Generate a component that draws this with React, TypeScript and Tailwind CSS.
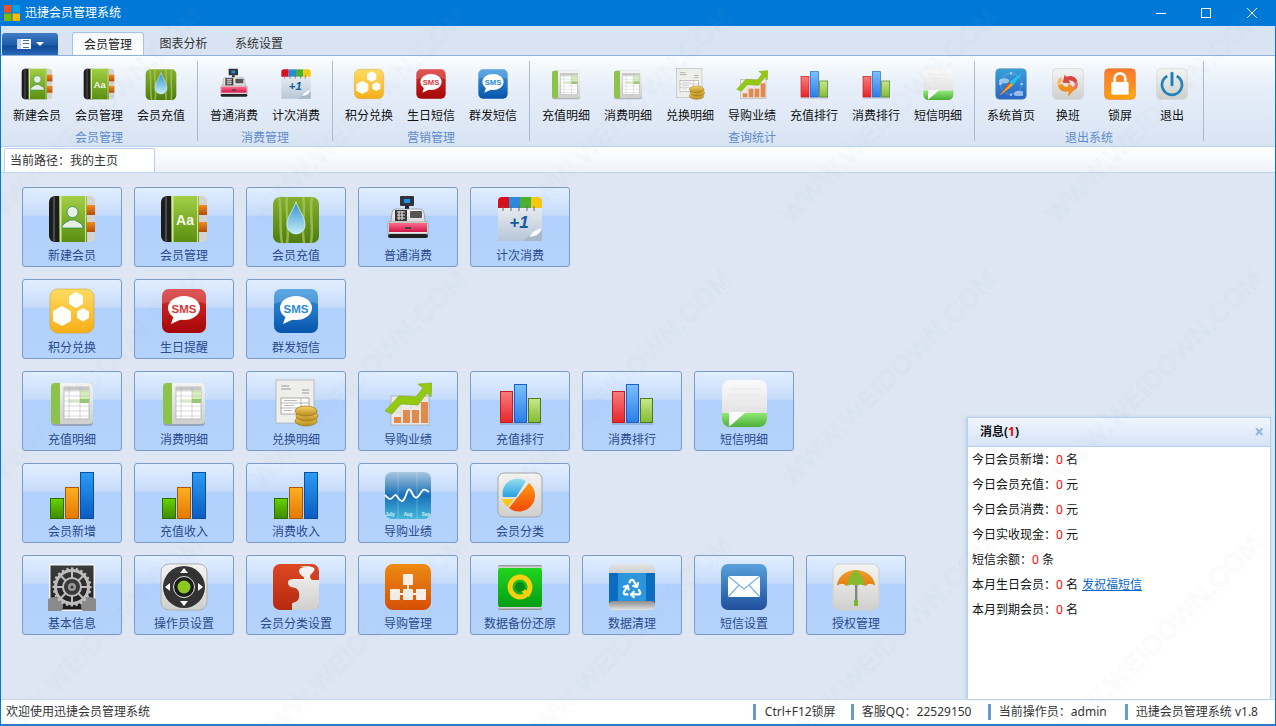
import { ReactNode } from "react";
import { Recycle } from "lucide-react";

const FONT = "font-['Noto_Sans','Noto_Sans_CJK_SC',sans-serif]";

function Grad({ id, from, to, mid }: { id: string; from: string; to: string; mid?: string }) {
  return (
    <linearGradient id={id} x1="0" y1="0" x2="0" y2="1">
      <stop offset="0" stopColor={from} />
      {mid && <stop offset="0.5" stopColor={mid} />}
      <stop offset="1" stopColor={to} />
    </linearGradient>
  );
}

function SharedDefs() {
  return (
    <svg className="absolute h-0 w-0">
      <defs>
        <Grad id="bookGreen" from="#a2cf45" to="#5b8f12" />
        <Grad id="orangeTab" from="#f58a1e" to="#b84a08" />
        <Grad id="stripes" from="#86b02c" to="#4f7c10" />
        <Grad id="drop" from="#2f8fd0" to="#c4ecf8" />
        <Grad id="gold" from="#ffdc62" to="#f7ae16" />
        <Grad id="red" from="#d9302e" to="#a50606" />
        <Grad id="blue" from="#3a96de" to="#0754ac" />
        <Grad id="silver" from="#f4f4f2" to="#cfcfcd" />
        <Grad id="barR" from="#f87d7d" to="#e8252a" />
        <Grad id="barB" from="#7cc0ff" to="#2b7de8" />
        <Grad id="barG" from="#c9e88a" to="#82bb34" />
        <Grad id="bar2G" from="#66d400" to="#3f8a00" />
        <Grad id="bar2O" from="#ffb020" to="#e47800" />
        <Grad id="bar2B" from="#2b9bf4" to="#0a5cc0" />
        <Grad id="note" from="#fbfbfb" to="#d8d8d8" />
        <Grad id="noteG" from="#8eea70" to="#4cae3c" />
        <Grad id="chart" from="#a9c6de" to="#46b6d8" mid="#1870b8" />
        <Grad id="puzzle" from="#dd4722" to="#b52a10" />
        <Grad id="org" from="#ee8a12" to="#d64f04" />
        <Grad id="barrel" from="#22d81e" to="#059a14" />
        <Grad id="steel" from="#8c8c8c" to="#e2e2e2" />
        <Grad id="steel2" from="#e2e2e2" to="#868686" />
        <Grad id="mail" from="#5aa0dc" to="#1f4f9c" />
        <Grad id="compass" from="#38a0d8" to="#2a62c8" />
        <Grad id="lock" from="#ff7a30" to="#ff9c08" />
        <Grad id="calBody" from="#f6f8fa" to="#b8c6d6" />
        <Grad id="coin" from="#f6d56a" to="#b98a18" />
        <Grad id="pieO" from="#ff9a10" to="#f24a08" />
        <Grad id="pieB" from="#98e0f0" to="#28a0e0" />
        <Grad id="canopy" from="#f3a030" to="#e07c10" />
        <Grad id="dial" from="#3c3c3c" to="#1c1c1c" />
        <Grad id="pink" from="#ff6a8c" to="#d01848" />
      </defs>
    </svg>
  );
}

function Svg({ children }: { children: ReactNode }) {
  return (
    <svg viewBox="0 0 48 48" className="block h-full w-full">
      {children}
    </svg>
  );
}

function BookBase({ children }: { children: ReactNode }) {
  return (
    <Svg>
      <rect x="30" y="1" width="17" height="46" rx="5" fill="#d6d2ce" />
      <rect x="39" y="10" width="8" height="10" fill="url(#orangeTab)" />
      <rect x="39" y="27" width="8" height="10" fill="url(#orangeTab)" />
      <rect x="1" y="1" width="18" height="46" rx="6" fill="#1d1d1d" />
      <rect x="5" y="1" width="2" height="46" fill="#4a4a4a" />
      <rect x="11" y="1" width="28" height="46" fill="url(#bookGreen)" />
      <rect x="12" y="1" width="1.5" height="46" fill="#d6e8a8" />
      <rect x="37" y="1" width="1" height="46" fill="#d0e4a0" />
      {children}
    </Svg>
  );
}

function Sms({ fill, text }: { fill: string; text: string }) {
  return (
    <Svg>
      <rect x="2" y="2" width="44" height="44" rx="7" fill={`url(#${fill})`} />
      <path d="M2 9a7 7 0 0 1 7-7h30a7 7 0 0 1 7 7v8c-12-5-32-5-44 0z" fill="#fff" opacity=".18" />
      <ellipse cx="24" cy="21" rx="16" ry="12" fill="#fff" />
      <path d="M14 28l-3 9 11-5z" fill="#fff" />
      <text x="24" y="25.5" textAnchor="middle" fontSize="11.5" fontWeight="700" fill={text} fontFamily="Liberation Sans, sans-serif">
        SMS
      </text>
    </Svg>
  );
}

function Sheet() {
  const ys = [10, 15, 20, 25, 30, 35];
  return (
    <Svg>
      <rect x="3" y="4" width="42" height="43" rx="4" fill="#6e6e6e" opacity=".45" />
      <rect x="3" y="4" width="42" height="41" rx="4" fill="url(#silver)" />
      <path d="M7 4h5v41H7a4 4 0 0 1-4-4V8a4 4 0 0 1 4-4z" fill="#8cc34a" />
      <rect x="16" y="8" width="25" height="32" fill="#fff" stroke="#a8a8a8" strokeWidth=".7" />
      <rect x="16" y="8" width="25" height="3.5" fill="#c8c8c8" />
      <rect x="32" y="11" width="9" height="9" fill="#d6eebc" />
      <rect x="32" y="20" width="9" height="4" fill="#96c86a" />
      <rect x="21" y="20" width="11" height="4" fill="#e2f2d2" />
      {ys.map((y) => (
        <line key={y} x1="16" x2="41" y1={y + 2} y2={y + 2} stroke="#bbb" strokeWidth=".5" />
      ))}
      <line x1="21" x2="21" y1="8" y2="40" stroke="#aaa" strokeWidth=".5" />
      <line x1="32" x2="32" y1="8" y2="40" stroke="#aaa" strokeWidth=".5" />
    </Svg>
  );
}

function Bars3() {
  return (
    <Svg>
      <rect x="4.5" y="12.5" width="12" height="31" fill="url(#barR)" stroke="#c81c1c" />
      <rect x="18.5" y="5.5" width="12" height="38" fill="url(#barB)" stroke="#1c60c4" />
      <rect x="32.5" y="19.5" width="12" height="24" fill="url(#barG)" stroke="#4c7a18" />
      <rect x="4" y="44" width="41" height="2" fill="#506070" opacity=".25" />
    </Svg>
  );
}

function Bars2() {
  return (
    <Svg>
      <rect x="2.5" y="27.5" width="13" height="20" fill="url(#bar2G)" stroke="#2f6a10" />
      <rect x="17.5" y="16.5" width="13" height="31" fill="url(#bar2O)" stroke="#a85a08" />
      <rect x="32.5" y="1.5" width="13" height="46" fill="url(#bar2B)" stroke="#0b4ca0" />
    </Svg>
  );
}

function Growth() {
  return (
    <Svg>
      <rect x="7" y="17" width="38" height="29" fill="#ece9e4" stroke="#aaa" strokeWidth=".8" />
      <path d="M7 24h38M7 33h38M17 17v29M27 17v29M37 17v29" stroke="#ccc" strokeWidth=".5" />
      <rect x="10" y="38" width="7" height="6" fill="#e08a4e" />
      <rect x="19" y="31" width="7" height="13" fill="#e08a4e" />
      <rect x="28" y="31" width="7" height="13" fill="#e08a4e" />
      <rect x="37" y="23" width="7" height="21" fill="#e08a4e" />
      <path d="M1 32L15 17l17 1L39 9l-5-4 14-1-1 14-4-4-9 12-17-1-9 10z" fill="#94c912" stroke="#6f9c0a" strokeWidth=".5" />
    </Svg>
  );
}

const icons: Record<string, ReactNode> = {
  bookUser: (
    <BookBase>
      <circle cx="24.5" cy="17" r="5.5" fill="#e8efe2" stroke="#0e8a60" strokeWidth=".7" />
      <path d="M14 33c0-5 6-6 8-8h5c2 2 8 3 8 8z" fill="#e8efe2" stroke="#0e8a60" strokeWidth=".7" />
    </BookBase>
  ),
  bookAa: (
    <BookBase>
      <text x="25" y="30" textAnchor="middle" fontSize="14" fontWeight="700" fill="#f4f8e8" fontFamily="Liberation Sans, sans-serif">
        Aa
      </text>
    </BookBase>
  ),
  water: (
    <Svg>
      <rect x="1" y="2" width="46" height="46" rx="7" fill="url(#stripes)" />
      <path d="M7 2c3 14 0 30 3 46M15 2c-2 14 3 30 0 46M31 2c3 14-2 30 1 46M40 2c-3 14 2 30-1 46" stroke="#a8ca62" strokeWidth="2.5" fill="none" opacity=".7" />
      <path d="M24 7c3 9 9 15 9 23a9 9 0 0 1-18 0c0-8 6-14 9-23z" fill="url(#drop)" stroke="#d8f2f8" strokeWidth=".8" />
    </Svg>
  ),
  register: (
    <Svg>
      <rect x="16" y="1" width="14" height="10" rx="1" fill="#30343a" />
      <rect x="20" y="4" width="6" height="4" fill="#1c8fe8" />
      <rect x="21" y="11" width="4" height="3" fill="#222" />
      <path d="M8 18q0-4 4-4h24q4 0 4 4l2 14H6z" fill="url(#silver)" stroke="#7e7e7e" strokeWidth=".6" />
      <rect x="11" y="15" width="12" height="11" fill="#3a3a3a" />
      <path d="M13 17h8M13 20h8M13 23h8M15 16v9M18 16v9" stroke="#ddd" strokeWidth="1.2" />
      <rect x="26" y="16" width="12" height="7" rx="1" fill="#555" />
      <rect x="4" y="27" width="40" height="12" rx="1" fill="#e8e8e8" stroke="#777" strokeWidth=".5" />
      <rect x="5" y="28" width="38" height="9" fill="url(#pink)" />
      <rect x="21" y="32" width="6" height="2" fill="#444" />
      <rect x="4" y="39" width="40" height="4" rx="2" fill="#222" />
    </Svg>
  ),
  calendar: (
    <Svg>
      <path d="M2 6q0-4 4-4h36q4 0 4 4v40H2z" fill="url(#calBody)" />
      <path d="M2 6q0-4 4-4h7v11H2z" fill="#d5101c" />
      <rect x="13" y="2" width="11" height="11" fill="#2b8ad8" />
      <rect x="24" y="2" width="11" height="11" fill="#4ab030" />
      <path d="M35 2h7q4 0 4 4v7H35z" fill="#f8c810" />
      <path d="M7 11v5M15 11v5M23 11v5M31 11v5M38 11v5" stroke="#666" strokeWidth="1" />
      <text x="23" y="33" textAnchor="middle" fontSize="17" fontWeight="700" fontStyle="italic" fill="#0f5ca0" fontFamily="Liberation Sans, sans-serif">
        +1
      </text>
      <path d="M46 33c-6 6-12 6-18 13h18z" fill="#9fb0c2" opacity=".7" />
      <path d="M46 33c-4 1-11 4-12 9 4-1 9-1 12-9z" fill="#fff" />
    </Svg>
  ),
  hex: (
    <Svg>
      <rect x="2" y="2" width="44" height="44" rx="8" fill="url(#gold)" stroke="#d8a030" strokeWidth=".6" />
      <polygon points="28,5 35,9 35,17 28,21 21,17 21,9" fill="#fdfdf8" />
      <polygon points="14,19 23,24 23,34 14,39 5,34 5,24" fill="#fdfdf8" />
      <polygon points="35,21 41,24.5 41,31 35,34.5 29,31 29,24.5" fill="#fdfdf8" />
    </Svg>
  ),
  smsRed: <Sms fill="red" text="#d83838" />,
  smsBlue: <Sms fill="blue" text="#2a8ad8" />,
  sheet: <Sheet />,
  invoice: (
    <Svg>
      <rect x="4" y="1" width="38" height="43" fill="#eeeeea" stroke="#a8a8a8" strokeWidth=".7" />
      <path d="M9 7h8M9 10h10M30 11h7M30 14h7" stroke="#999" strokeWidth="1" />
      <rect x="9" y="19" width="28" height="16" fill="#fff" stroke="#888" strokeWidth=".7" />
      <path d="M9 24h28M9 29h28M29 19v16M12 21.5h13M12 26.5h10M12 31.5h8" stroke="#999" strokeWidth=".7" />
      <ellipse cx="34" cy="42" rx="11" ry="5" fill="url(#coin)" stroke="#8d6a10" strokeWidth=".6" />
      <ellipse cx="35" cy="37" rx="11" ry="5" fill="url(#coin)" stroke="#8d6a10" strokeWidth=".6" />
      <ellipse cx="34" cy="32" rx="11" ry="5" fill="url(#coin)" stroke="#8d6a10" strokeWidth=".6" />
    </Svg>
  ),
  growth: <Growth />,
  bars3: <Bars3 />,
  note: (
    <Svg>
      <rect x="2" y="1" width="45" height="47" rx="8" fill="url(#note)" />
      <path d="M10 10h30M10 16h30M10 22h30M10 28h30" stroke="#e6e6e6" strokeWidth=".8" />
      <path d="M2 34h45v6a8 8 0 0 1-8 8H10a8 8 0 0 1-8-8z" fill="url(#noteG)" />
      <path d="M9 33h17L10 47H9z" fill="#fafafa" />
    </Svg>
  ),
  bars2: <Bars2 />,
  chart: (
    <Svg>
      <rect x="1" y="1" width="46" height="47" rx="7" fill="url(#chart)" />
      <path d="M14 1v47M33 1v47" stroke="#fff" strokeWidth=".5" opacity=".5" />
      <path d="M1 24c3 3 5 6 8 2s3-2 6 2 5 2 7-4 3-8 6-2 5 6 8 1 4-6 9-2" fill="none" stroke="#fff" strokeWidth="1.8" />
      <g fontSize="4.5" fontWeight="700" fill="#d8f0f8" fontFamily="Liberation Sans, sans-serif" textAnchor="middle">
        <text x="6" y="45">July</text>
        <text x="24" y="45">Aug</text>
        <text x="42" y="45">Sep</text>
      </g>
    </Svg>
  ),
  pie: (
    <Svg>
      <rect x="2" y="2" width="44" height="44" rx="6" fill="url(#silver)" stroke="#a6a6a6" />
      <path d="M33 12a15 15 0 1 1-20 25z" fill="url(#pieO)" />
      <path d="M30 10L20 26H7a15 15 0 0 1 23-16z" fill="url(#pieB)" />
      <path d="M6 28h12l-6 8c-3-2-5-5-6-8z" fill="#ffc814" />
    </Svg>
  ),
  gear: (
    <Svg>
      <rect x="1" y="1" width="46" height="47" rx="1" fill="#f4f4f4" />
      <rect x="2.5" y="2.5" width="43" height="44" fill="url(#dial)" />
      <circle cx="6" cy="43" r="9" fill="#8a8a8a" />
      <circle cx="42" cy="43" r="9" fill="#8a8a8a" />
      {Array.from({ length: 24 }, (_, i) => (
        <rect key={i} x="23" y="4.5" width="2.4" height="4" fill="#bdbdbd" transform={`rotate(${i * 15} 24 24)`} />
      ))}
      <circle cx="24" cy="24" r="16.5" fill="none" stroke="#bdbdbd" strokeWidth="3" />
      <path d="M24 8v32M8 24h32M12 12l24 24M36 12L12 36" stroke="#bdbdbd" strokeWidth="2" />
      <circle cx="24" cy="24" r="9" fill="#3a3a3a" stroke="#bdbdbd" strokeWidth="2" />
      <circle cx="24" cy="24" r="4" fill="#999" />
      <circle cx="24" cy="24" r="1.5" fill="#333" />
    </Svg>
  ),
  dpad: (
    <Svg>
      <rect x="1" y="1" width="46" height="46" rx="8" fill="url(#silver)" stroke="#b0b0b0" />
      <circle cx="24" cy="24" r="21" fill="#333" />
      <circle cx="24" cy="24" r="10.5" fill="#1c1c1c" stroke="#ddd" strokeWidth="1" />
      <circle cx="24" cy="24" r="6.5" fill="#8cc820" />
      <polygon points="24,5 20,10 28,10" fill="#fff" />
      <polygon points="24,43 20,38 28,38" fill="#fff" />
      <polygon points="5,24 10,20 10,28" fill="#fff" />
      <polygon points="43,24 38,20 38,28" fill="#fff" />
    </Svg>
  ),
  puzzle: (
    <Svg>
      <rect x="1" y="1" width="46" height="46" rx="7" fill="url(#puzzle)" />
      <path d="M27 4c5-1 13-1 15 1 2 3-3 5-4 8 0 2 1 4 3 4h6v24a6 6 0 0 1-6 6H20v-6c0-2 3-1 5-3 3-2 3-9 0-12-2-2-5-1-6-2-2-1-3-2-3-5 0-2 2-3 6-3h10c1-3-4-3-5-7 0-3 1-4 5-5z" fill="url(#silver)" />
    </Svg>
  ),
  org: (
    <Svg>
      <rect x="1" y="1" width="46" height="46" rx="8" fill="url(#org)" />
      <rect x="19" y="11" width="10" height="11" rx="1" fill="#f7efe6" />
      <rect x="6" y="26" width="10" height="11" rx="1" fill="#f7efe6" />
      <rect x="19" y="26" width="10" height="11" rx="1" fill="#f7efe6" />
      <rect x="32" y="26" width="10" height="11" rx="1" fill="#f7efe6" />
      <path d="M24 22v5M16 31h16" stroke="#f7efe6" strokeWidth="2" />
    </Svg>
  ),
  backup: (
    <Svg>
      <rect x="2" y="2" width="44" height="45" rx="6" fill="url(#barrel)" />
      <rect x="2" y="2" width="44" height="3" rx="1.5" fill="url(#steel)" />
      <rect x="2" y="44" width="44" height="3" rx="1.5" fill="url(#steel2)" />
      <circle cx="24" cy="24" r="10" fill="none" stroke="#f8d010" strokeWidth="5" />
      <path d="M24 24l11 6-2 4-9-6z" fill="#f8d010" />
      <circle cx="24" cy="24" r="5" fill="#0a8a18" />
    </Svg>
  ),
  recycle: (
    <Svg>
      <rect x="1" y="1" width="46" height="46" rx="6" fill="url(#steel2)" />
      <rect x="1" y="10" width="46" height="30" fill="#0c6cc0" />
      <rect x="10" y="10" width="28" height="30" fill="#3aa8e8" opacity=".7" />
      <rect x="1" y="38" width="46" height="9" rx="4" fill="url(#steel)" />
      <Recycle x={13} y={14} width={22} height={22} color="#fff" strokeWidth={2.4} />
    </Svg>
  ),
  mail: (
    <Svg>
      <rect x="1" y="1" width="46" height="46" rx="7" fill="url(#mail)" />
      <rect x="8" y="13" width="32" height="21" fill="#fff" />
      <path d="M8 13l16 13 16-13M8 34l11-12M40 34L29 22" fill="none" stroke="#7ab0e0" strokeWidth="1.2" />
    </Svg>
  ),
  umbrella: (
    <Svg>
      <rect x="1" y="1" width="46" height="46" rx="7" fill="url(#silver)" stroke="#d0d0d0" />
      <path d="M5 23a19 16 0 0 1 38 0c-3-3-7-3-9 0-3-3-7-3-10 0-3-3-7-3-10 0-2-3-6-3-9 0z" fill="url(#canopy)" />
      <path d="M24 7c-5 3-8 9-9 16 3-2 6-2 9 0 3-2 6-2 9 0-1-7-4-13-9-16z" fill="#8ab82c" />
      <rect x="23" y="22" width="2.4" height="17" fill="#7e8a80" />
      <rect x="22" y="37" width="4" height="6" fill="#7cb82a" />
    </Svg>
  ),
  compass: (
    <Svg>
      <rect x="1" y="1" width="46" height="46" rx="6" fill="url(#compass)" stroke="#6a9ab0" />
      <path d="M6 18c4-3 10-4 14-1 3 2 0 6-4 6s-7 1-10-1zM28 38c3-4 9-5 14-3v7H30z" fill="#d8eef8" opacity=".6" />
      <path d="M24 6v4M24 38v4M6 24h4M38 24h4" stroke="#fff" strokeWidth="1.4" />
      <circle cx="24" cy="24" r="16" fill="none" stroke="#fff" strokeWidth=".7" opacity=".4" />
      <path d="M42 6L22 21l5 5z" fill="#22c4f4" />
      <path d="M6 42l16-21 5 5z" fill="#e2561a" />
      <path d="M6 42l18-19 3 3z" fill="#f8b020" />
    </Svg>
  ),
  swap: (
    <Svg>
      <rect x="1" y="1" width="46" height="46" rx="6" fill="url(#silver)" stroke="#d0d0d0" />
      <path d="M38 21c-1-8-9-11-16-8l-3-3-3 12 12 1-3-4c4-1 7 0 9 4z" fill="#d84840" />
      <path d="M38 21c2 6 0 11-6 13l-1-5c3-1 4-4 3-6z" fill="#e87068" />
      <path d="M9 26c1 8 9 11 16 9l-1 8 11-12-10-8-1 5c-4 1-7-1-8-4z" fill="#ee9020" />
      <path d="M9 26c-2-6 0-10 5-12l2 5c-3 1-4 3-3 6z" fill="#f6bc60" />
    </Svg>
  ),
  lock: (
    <Svg>
      <rect x="1" y="1" width="46" height="46" rx="6" fill="url(#lock)" stroke="#e07a2c" />
      <path d="M47 7v22L26 47h15a6 6 0 0 0 6-6z" fill="#ffb018" opacity=".5" />
      <path d="M16 22v-6a8 8 0 0 1 16 0v6" fill="none" stroke="#fff" strokeWidth="4" />
      <rect x="11" y="21" width="26" height="19" rx="2" fill="#fff" />
    </Svg>
  ),
  power: (
    <Svg>
      <rect x="1" y="1" width="46" height="46" rx="6" fill="url(#silver)" stroke="#d4d4d4" />
      <path d="M17 12a15 15 0 1 0 14 0" fill="none" stroke="#1f82b8" strokeWidth="4" />
      <path d="M24 8v17" stroke="#1f82b8" strokeWidth="4.5" strokeLinecap="round" />
    </Svg>
  ),
};

type Item = [string, string];

const ribbon: { name: string; items: Item[] }[] = [
  { name: "会员管理", items: [["新建会员", "bookUser"], ["会员管理", "bookAa"], ["会员充值", "water"]] },
  { name: "消费管理", items: [["普通消费", "register"], ["计次消费", "calendar"]] },
  { name: "营销管理", items: [["积分兑换", "hex"], ["生日短信", "smsRed"], ["群发短信", "smsBlue"]] },
  {
    name: "查询统计",
    items: [["充值明细", "sheet"], ["消费明细", "sheet"], ["兑换明细", "invoice"], ["导购业绩", "growth"], ["充值排行", "bars3"], ["消费排行", "bars3"], ["短信明细", "note"]],
  },
  { name: "退出系统", items: [["系统首页", "compass"], ["换班", "swap"], ["锁屏", "lock"], ["退出", "power"]] },
];

const tileRows: Item[][] = [
  [["新建会员", "bookUser"], ["会员管理", "bookAa"], ["会员充值", "water"], ["普通消费", "register"], ["计次消费", "calendar"]],
  [["积分兑换", "hex"], ["生日提醒", "smsRed"], ["群发短信", "smsBlue"]],
  [["充值明细", "sheet"], ["消费明细", "sheet"], ["兑换明细", "invoice"], ["导购业绩", "growth"], ["充值排行", "bars3"], ["消费排行", "bars3"], ["短信明细", "note"]],
  [["会员新增", "bars2"], ["充值收入", "bars2"], ["消费收入", "bars2"], ["导购业绩", "chart"], ["会员分类", "pie"]],
  [["基本信息", "gear"], ["操作员设置", "dpad"], ["会员分类设置", "puzzle"], ["导购管理", "org"], ["数据备份还原", "backup"], ["数据清理", "recycle"], ["短信设置", "mail"], ["授权管理", "umbrella"]],
];

const messages: { label: string; unit: string; link?: string }[] = [
  { label: "今日会员新增：", unit: "名" },
  { label: "今日会员充值：", unit: "元" },
  { label: "今日会员消费：", unit: "元" },
  { label: "今日实收现金：", unit: "元" },
  { label: "短信余额：", unit: "条" },
  { label: "本月生日会员：", unit: "名", link: "发祝福短信" },
  { label: "本月到期会员：", unit: "名" },
];

function Tile({ label, icon }: { label: string; icon: string }) {
  return (
    <div className="flex h-20 w-[100px] flex-col items-center rounded-[3px] border border-[#7a9aca] bg-[linear-gradient(#e2eeff_0%,#c6dcfb_35%,#b0d1fc_36%,#b4d3fb_100%)] pt-[7px]">
      <div className="h-12 w-12">{icons[icon]}</div>
      <span className="mt-[5px] text-xs leading-4 text-[#2a4a8e]">{label}</span>
    </div>
  );
}

function Watermarks() {
  const marks: [number, number][] = [];
  for (const y of [20, 283, 548]) {
    for (let x = 208; x < 1500; x += 265) marks.push([x, y]);
  }
  return (
    <div className="pointer-events-none absolute inset-0 overflow-hidden">
      {marks.map(([x, y]) => (
        <span
          key={`${x}-${y}`}
          className="absolute origin-bottom-right -rotate-45 whitespace-nowrap font-['Liberation_Sans',sans-serif] text-[26px] leading-none tracking-[1px] text-transparent [-webkit-text-stroke:0.7px_rgba(150,170,200,0.13)]"
          style={{ right: 1276 - x, top: y - 26 }}
        >
          WWW.WEIDOWN.COM
        </span>
      ))}
    </div>
  );
}

export default function App() {
  return (
    <div className={`${FONT} relative flex h-screen w-full flex-col overflow-hidden border-x border-[#0078d7] bg-[#dde6f2] text-xs text-[#222]`}>
      <SharedDefs />

      <header className="flex h-[26px] shrink-0 items-center bg-[#0078d7] pl-[3px] text-white">
        <svg viewBox="0 0 16 16" className="h-4 w-4">
          <rect width="7.5" height="7.5" fill="#f25022" />
          <rect x="8.5" width="7.5" height="7.5" fill="#00a4ef" />
          <rect y="8.5" width="7.5" height="7.5" fill="#7fba00" />
          <rect x="8.5" y="8.5" width="7.5" height="7.5" fill="#ffb900" />
        </svg>
        <span className="ml-[5px] leading-4">迅捷会员管理系统</span>
        <div className="ml-auto flex items-center pr-[18px]">
          <div className="h-px w-[10px] bg-white" />
          <div className="ml-[35px] h-[10px] w-[10px] border border-white" />
          <svg viewBox="0 0 10 10" className="ml-[36px] h-[10px] w-[10px]">
            <path d="M0 0l10 10M10 0L0 10" stroke="#fff" strokeWidth="1" />
          </svg>
        </div>
      </header>

      <nav className="flex h-[29px] shrink-0 items-end bg-[#d8e4f2] pl-px">
        <div className="mb-0 flex h-[22px] w-[56px] items-center justify-center gap-[5px] rounded-t-[3px] bg-[linear-gradient(#3f7cc4_0%,#1d5aa8_55%,#0f4a98_60%,#2a68b8_100%)]">
          <div className="flex h-[10px] w-[14px] bg-white">
            <div className="w-[4px] bg-[#c8d4e4]" />
            <div className="flex flex-1 flex-col justify-around px-[2px]">
              <div className="h-px bg-[#4a6a9c]" />
              <div className="h-px bg-[#4a6a9c]" />
              <div className="h-px bg-[#4a6a9c]" />
            </div>
          </div>
          <div className="h-0 w-0 border-x-[4px] border-t-[4px] border-x-transparent border-t-white" />
        </div>
        <div className="ml-[14px] flex h-[23px] w-[72px] items-center justify-center rounded-t-[3px] border border-b-0 border-[#a9c2e2] bg-[linear-gradient(#f4f8fd,#ffffff)] pt-px leading-4">
          会员管理
        </div>
        <div className="flex h-[23px] w-[79px] items-center justify-center pt-px leading-4 text-[#333]">图表分析</div>
        <div className="flex h-[23px] w-[72px] items-center justify-center pt-px leading-4 text-[#333]">系统设置</div>
      </nav>

      <section className="flex h-[92px] shrink-0 border-y border-t-[#90b0dc] border-b-[#b8d2f4] bg-[linear-gradient(#fbfdff_0%,#e6eef9_35%,#d9e4f3_100%)] pl-[5px]">
        {ribbon.map((group) => (
          <div key={group.name} className="flex">
            <div className="flex flex-col items-center">
              <div className="flex">
                {group.items.map(([label, icon]) => (
                  <div key={label} className={`flex flex-col items-center pt-3 ${label.length > 2 ? "w-[62px]" : "w-[52px]"}`}>
                    <div className="h-8 w-8">{icons[icon]}</div>
                    <span className="mt-[8px] leading-4 text-[#111]">{label}</span>
                  </div>
                ))}
              </div>
              <span className="mt-[6px] leading-4 text-[#5f8ccc]">{group.name}</span>
            </div>
            <div className="mx-[5px] mt-[5px] h-20 w-px bg-[#a9bbd2]" />
          </div>
        ))}
      </section>

      <div className="flex h-[26px] shrink-0 border-b border-[#c0d4ec] bg-[linear-gradient(#ffffff,#eef3fa)] pl-[3px] pt-px">
        <div className="flex h-[24px] w-[151px] items-center rounded-t-[2px] border-x border-t border-[#bdd0e8] bg-white pl-[5px] leading-4 text-[#333]">
          当前路径：我的主页
        </div>
      </div>

      <main className="relative flex flex-1 flex-col gap-3 pl-[21px] pt-[14px]">
        {tileRows.map((row, i) => (
          <div key={i} className="flex gap-3">
            {row.map(([label, icon]) => (
              <Tile key={label + icon} label={label} icon={icon} />
            ))}
          </div>
        ))}

        <aside className="absolute bottom-0 right-[4px] flex h-[282px] w-[304px] flex-col border-x border-t border-[#b6d0f2] bg-white shadow-[-1px_0_3px_rgba(120,160,220,0.4)]">
          <div className="flex h-[29px] shrink-0 items-center border-b border-[#b6d0f2] bg-[linear-gradient(#f0f5ff,#d6e4f6)] pl-3 pr-[6px]">
            <span className="font-bold leading-4 text-[#111]">
              消息(<span className="text-[#f00]">1</span>)
            </span>
            <span className="ml-auto text-[17px] font-bold leading-4 text-[#8fb2e0]">×</span>
          </div>
          <div className="px-[4px]">
            {messages.map((m) => (
              <div key={m.label} className="flex h-[25px] items-center whitespace-pre leading-4 text-[#111]">
                <span>{m.label}</span>
                <span className="text-[#f00]">0</span>
                <span> {m.unit}</span>
                {m.link && <a className="ml-1 text-[#0a66c8] underline">{m.link}</a>}
              </div>
            ))}
          </div>
        </aside>
      </main>

      <footer className="flex h-[27px] shrink-0 items-center border-t border-b-2 border-t-[#c6d8ec] border-b-[#2c7cc4] bg-white pl-[5px] leading-4 text-[#333]">
        <span>欢迎使用迅捷会员管理系统</span>
        <div className="ml-auto flex pr-[17px]">
          <span className="w-[98px] border-l-[3px] border-[#6a98d0] pl-[9px]">Ctrl+F12锁屏</span>
          <span className="w-[137px] border-l-[3px] border-[#6a98d0] pl-[8px]">客服QQ：22529150</span>
          <span className="w-[137px] border-l-[3px] border-[#6a98d0] pl-[8px]">当前操作员：admin</span>
          <span className="border-l-[3px] border-[#6a98d0] pl-[8px]">迅捷会员管理系统 v1.8</span>
        </div>
      </footer>

      <Watermarks />
    </div>
  );
}
